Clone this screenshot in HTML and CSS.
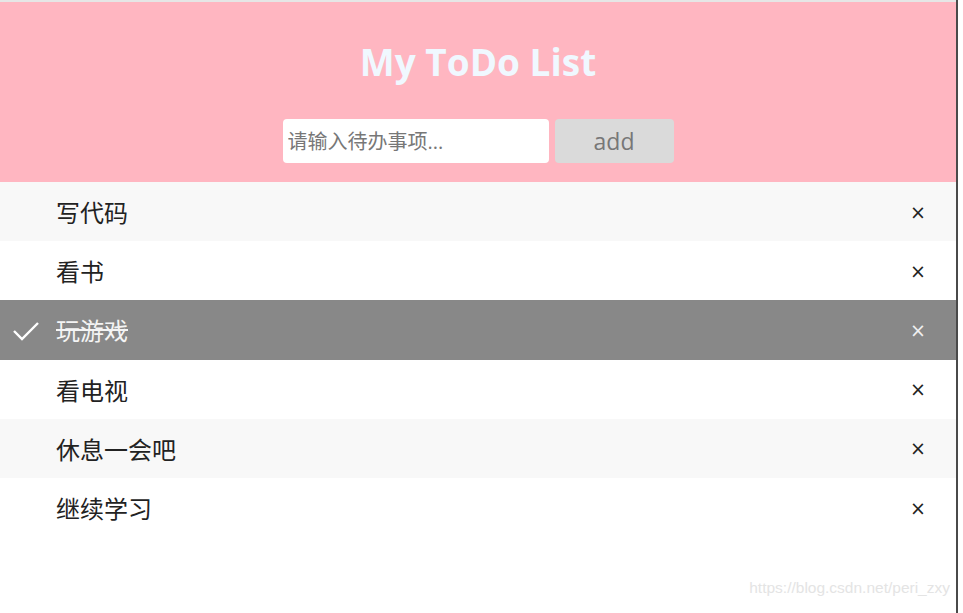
FILE: index.html
```html
<!DOCTYPE html>
<html lang="zh-CN">
<head>
    <meta charset="UTF-8">
    <title>My ToDo List</title>
    <link rel="stylesheet" href="styles.css">
</head>
<body>
  <div class="page">
    <div class="app">
      <div class="header">
        <h2>My ToDo List</h2>
        <div class="add-box">
          <input type="text" id="todoInput" placeholder="请输入待办事项...">
          <button class="add-btn">add</button>
        </div>
      </div>

      <ul class="todo-list">
        <li><span class="text">写代码</span><span class="close">×</span></li>
        <li><span class="text">看书</span><span class="close">×</span></li>
        <li class="checked">
          <svg class="tick" width="28" height="22" viewBox="0 0 28 22"><polyline points="2,11 10,19 26,3" fill="none" stroke="#fff" stroke-width="2.4"/></svg>
          <span class="text">玩游戏</span><span class="close">×</span>
        </li>
        <li><span class="text">看电视</span><span class="close">×</span></li>
        <li><span class="text">休息一会吧</span><span class="close">×</span></li>
        <li><span class="text">继续学习</span><span class="close">×</span></li>
      </ul>

      <div class="watermark">https://blog.csdn.net/peri_zxy</div>
    </div>
    <div class="edge"></div>
  </div>
</body>
</html>
```

FILE: styles.css
```css
html, body {
margin: 0;
padding: 0;
background-color: white;
}

body {
font-family: "Open Sans", "Noto Sans CJK SC", sans-serif;
}

.page {
display: flex;
height: 613px;
}

.app {
width: 956px;
border-top: 2px solid #e6e6e6;
display: flex;
flex-direction: column;
}

.edge {
width: 2px;
background-color: #4a4a4a;
}

.header {
background-color: #ffb6c1;
height: 180px;
text-align: center;
box-sizing: border-box;
padding-top: 35px;
}

.header h2 {
margin: 0;
color: #f0f8ff;
font-size: 37px;
font-weight: bold;
line-height: 50px;
}

.add-box {
display: flex;
justify-content: center;
margin-top: 32px;
}

.add-box input {
width: 266px;
height: 44px;
box-sizing: border-box;
border: none;
border-radius: 4px;
padding: 0 5px;
font-family: "Open Sans", "Noto Sans CJK SC", sans-serif;
font-size: 20px;
outline: none;
}

.add-box input::placeholder {
color: #777;
}

.add-btn {
width: 119px;
height: 44px;
margin-left: 6px;
border: none;
border-radius: 4px;
background-color: #dadada;
color: #777;
font-family: "Open Sans", sans-serif;
font-size: 23px;
padding: 0;
}

.todo-list {
list-style: none;
margin: 0;
padding: 0;
}

.todo-list li {
position: relative;
display: flex;
align-items: center;
height: 59.2px;
padding-left: 56px;
padding-right: 30px;
font-size: 24px;
color: #222;
background-color: white;
}

.todo-list li:nth-child(odd) {
background-color: #f8f8f8;
}

.todo-list li.checked {
background-color: #888;
color: #f4f4f4;
}

.todo-list li.checked .text {
text-decoration: line-through;
}

.tick {
position: absolute;
left: 12px;
top: 20px;
}

.text {
flex: 1;
font-family: "Noto Sans CJK SC", sans-serif;
}

.close {
font-family: "DejaVu Sans", sans-serif;
font-size: 19px;
color: #222;
}

.checked .close {
color: #f0f0f0;
}

.watermark {
margin-top: auto;
margin-bottom: 16px;
text-align: right;
padding-right: 6px;
font-family: "Liberation Sans", Arial, sans-serif;
font-size: 15.5px;
color: #e4e4e4;
}
```
